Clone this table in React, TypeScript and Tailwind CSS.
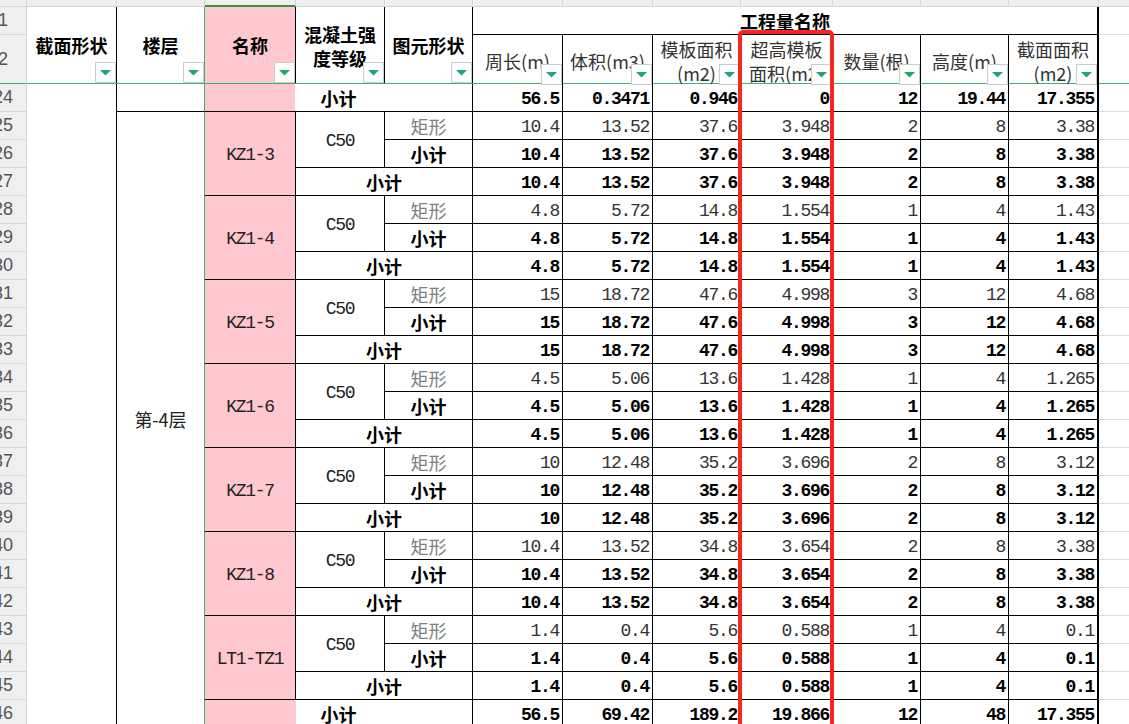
import React from "react";

const MONO = "font-['Liberation_Mono',monospace] text-[18px] tracking-[-1.3px]";
const CJK = "font-['Noto_Sans_CJK_SC',sans-serif] text-[18px]";

const numW = [
  "w-[90px] border-r",
  "w-[90px] border-r",
  "w-[88px] border-r",
  "w-[92px] border-r",
  "w-[88px] border-r",
  "w-[88px] border-r",
  "w-[90px] border-r-2",
];

function Filter() {
  return (
    <div className="absolute right-0 bottom-0 w-[21px] h-[21px] bg-white border border-[#cdcdcd] flex items-center justify-center">
      <svg width="11" height="6" viewBox="0 0 11 6">
        <polygon points="0,0 11,0 5.5,5.5" fill="#1ea86a" />
      </svg>
    </div>
  );
}

function Nums({ v, bold }: { v: string[]; bold?: boolean }) {
  return (
    <>
      {v.map((x, i) => (
        <div
          key={i}
          className={`${numW[i]} h-full border-b border-black flex items-center justify-end pr-[3px] pt-[4px] ${MONO} ${
            bold ? "font-bold text-black" : "text-[#333]"
          }`}
        >
          {x}
        </div>
      ))}
    </>
  );
}

function Group({ name, v }: { name: string; v: string[] }) {
  return (
    <div className="flex h-[84px]">
      <div className={`w-[91px] h-full bg-[#ffc7ce] border-r border-b border-black flex items-center justify-center pt-[4px] ${MONO} text-[#222]`}>
        {name}
      </div>
      <div className="flex flex-col">
        <div className="flex h-[56px]">
          <div className={`w-[89px] h-full border-r border-b border-black flex items-center justify-center pt-[3px] ${MONO} text-[#222]`}>
            C50
          </div>
          <div className="flex flex-col">
            <div className="flex h-[28px]">
              <div className={`w-[88px] h-full border-r border-b border-black flex items-center justify-center pt-[1px] leading-[24px] ${CJK} text-[#808080]`}>
                矩形
              </div>
              <Nums v={v} />
            </div>
            <div className="flex h-[28px]">
              <div className={`w-[88px] h-full border-r border-b border-black flex items-center justify-center pt-[1px] leading-[24px] font-bold text-black ${CJK}`}>
                小计
              </div>
              <Nums v={v} bold />
            </div>
          </div>
        </div>
        <div className="flex h-[28px]">
          <div className={`w-[177px] h-full border-r border-b border-black flex items-center justify-center pt-[1px] leading-[24px] font-bold text-black ${CJK}`}>
            小计
          </div>
          <Nums v={v} bold />
        </div>
      </div>
    </div>
  );
}

const groups: { name: string; v: string[] }[] = [
  { name: "KZ1-3", v: ["10.4", "13.52", "37.6", "3.948", "2", "8", "3.38"] },
  { name: "KZ1-4", v: ["4.8", "5.72", "14.8", "1.554", "1", "4", "1.43"] },
  { name: "KZ1-5", v: ["15", "18.72", "47.6", "4.998", "3", "12", "4.68"] },
  { name: "KZ1-6", v: ["4.5", "5.06", "13.6", "1.428", "1", "4", "1.265"] },
  { name: "KZ1-7", v: ["10", "12.48", "35.2", "3.696", "2", "8", "3.12"] },
  { name: "KZ1-8", v: ["10.4", "13.52", "34.8", "3.654", "2", "8", "3.38"] },
  { name: "LT1-TZ1", v: ["1.4", "0.4", "5.6", "0.588", "1", "4", "0.1"] },
];

const rowNums = ["24", "25", "26", "27", "28", "29", "30", "31", "32", "33", "34", "35", "36", "37", "38", "39", "40", "41", "42", "43", "44", "45", "46"];

const stripW = [
  "w-[90px]",
  "w-[88px]",
  "w-[91px] bg-[#d4d4d4] border-b-2 border-b-[#3f8f3f]",
  "w-[89px]",
  "w-[88px]",
  "w-[90px]",
  "w-[90px]",
  "w-[88px]",
  "w-[92px]",
  "w-[88px]",
  "w-[88px]",
  "w-[90px]",
  "w-[200px]",
];

const labels: { w: string; lines: string[] }[] = [
  { w: "w-[90px] border-r", lines: ["周长(m)"] },
  { w: "w-[90px] border-r", lines: ["体积(m3)"] },
  { w: "w-[88px] border-r", lines: ["模板面积", "(m2)"] },
  { w: "w-[92px] border-r", lines: ["超高模板", "面积(m2)"] },
  { w: "w-[88px] border-r", lines: ["数量(根)"] },
  { w: "w-[88px] border-r", lines: ["高度(m)"] },
  { w: "w-[90px] border-r-2", lines: ["截面面积", "(m2)"] },
];

function RowHeader() {
  const cell = "w-[43px] bg-[#efefef] border-r border-b border-[#d6d6d6] flex items-center justify-center pr-[4px] font-['Liberation_Sans',sans-serif] text-[18px] text-[#555]";
  return (
    <div className="flex flex-col w-[43px] shrink-0">
      <div className="w-[43px] h-[7px] bg-[#efefef] border-r border-b border-[#d6d6d6]" />
      <div className={`${cell} h-[28px]`}>1</div>
      <div className={`${cell} h-[49px] border-b-[#3bb273]`}>2</div>
      {rowNums.map((n) => (
        <div key={n} className={`${cell} h-[28px]`}>
          {n}
        </div>
      ))}
    </div>
  );
}

export default function App() {
  return (
    <div className="relative w-[1129px] h-[724px] overflow-hidden bg-white font-['Noto_Sans_CJK_SC',sans-serif]">
      <div className="flex -ml-[16px] w-[1400px]">
        <RowHeader />
        <div className="flex flex-col">
          {/* column letter strip */}
          <div className="flex h-[7px]">
            {stripW.map((w, i) => (
              <div key={i} className={`${w} h-full bg-[#efefef] border-r border-b border-[#d6d6d6]`} />
            ))}
          </div>

          {/* header rows 1-2 */}
          <div className="flex h-[77px] border-b border-[#3bb273]">
            <div className={`relative w-[90px] h-full border-r border-black flex items-center justify-center font-bold text-black ${CJK}`}>
              截面形状
              <Filter />
            </div>
            <div className={`relative w-[88px] h-full border-r border-[#3bb273] flex items-center justify-center font-bold text-black ${CJK}`}>
              楼层
              <Filter />
            </div>
            <div className={`relative w-[91px] h-full bg-[#ffc7ce] border-r border-black flex items-center justify-center font-bold text-black ${CJK}`}>
              名称
              <Filter />
            </div>
            <div className={`relative w-[89px] h-full border-r border-black flex flex-col items-center justify-center pt-[2px] leading-[24px] font-bold text-black ${CJK}`}>
              <span>混凝土强</span>
              <span>度等级</span>
              <Filter />
            </div>
            <div className={`relative w-[88px] h-full border-r border-black flex items-center justify-center font-bold text-black ${CJK}`}>
              图元形状
              <Filter />
            </div>
            <div className="flex flex-col w-[626px] h-full">
              <div className={`h-[28px] border-r-2 border-b border-black flex items-center justify-center pt-[1px] font-bold text-black ${CJK}`}>
                工程量名称
              </div>
              <div className="flex flex-1">
                {labels.map((l, i) => (
                  <div
                    key={i}
                    className={`relative ${l.w} h-full border-black flex flex-col items-center justify-center pt-[2px] leading-[24px] whitespace-nowrap overflow-hidden text-[#333] ${CJK}`}
                  >
                    {l.lines.map((t, j) => (
                      <span key={j}>{t}</span>
                    ))}
                    <Filter />
                  </div>
                ))}
              </div>
            </div>
            <div className="flex flex-col w-[200px] h-full">
              <div className="h-[28px] border-b border-[#e0e0e0]" />
            </div>
          </div>

          {/* body */}
          <div className="flex">
            <div className="w-[90px] h-[644px] border-r border-black" />
            <div className="flex flex-col w-[982px]">
              <div className="flex h-[28px]">
                <div className="w-[88px] h-full border-r border-r-[#3bb273] border-b border-b-black" />
                <div className={`w-[268px] h-full bg-[linear-gradient(to_right,#ffc7ce_90px,#ffffff_90px)] border-r border-b border-black flex items-center justify-center pt-[1px] leading-[24px] font-bold text-black ${CJK}`}>
                  小计
                </div>
                <Nums v={["56.5", "0.3471", "0.946", "0", "12", "19.44", "17.355"]} bold />
              </div>
              <div className="flex">
                <div className={`w-[88px] h-[616px] border-r border-r-[#3bb273] border-b border-b-black flex items-center justify-center text-[#222] ${CJK}`}>
                  第-4层
                </div>
                <div className="flex flex-col">
                  {groups.map((g) => (
                    <Group key={g.name} name={g.name} v={g.v} />
                  ))}
                  <div className="flex h-[28px]">
                    <div className={`w-[268px] h-full bg-[linear-gradient(to_right,#ffc7ce_91px,#ffffff_91px)] border-r border-b border-black flex items-center justify-center pt-[1px] leading-[24px] font-bold text-black ${CJK}`}>
                      小计
                    </div>
                    <Nums v={["56.5", "69.42", "189.2", "19.866", "12", "48", "17.355"]} bold />
                  </div>
                </div>
              </div>
            </div>
            <div className="flex flex-col w-[200px]">
              {rowNums.map((n) => (
                <div key={n} className="h-[28px] border-b border-[#e0e0e0]" />
              ))}
            </div>
          </div>
        </div>
      </div>

      {/* red highlight box */}
      <div className="absolute left-[738px] top-[30px] w-[96px] h-[720px] border-4 border-[#f5281c] rounded-[5px] pointer-events-none" />
    </div>
  );
}
